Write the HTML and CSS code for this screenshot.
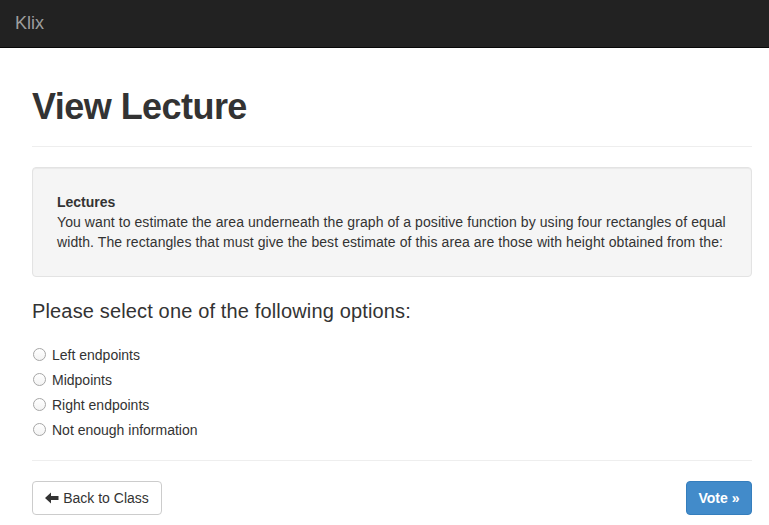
FILE: index.html
```html
<!DOCTYPE html>
<html>
<head>
<meta charset="utf-8">
<title>Klix</title>
<link rel="stylesheet" href="styles.css">
</head>
<body>
<nav class="navbar">
  <a class="brand" href="#">Klix</a>
</nav>
<main class="container">
  <div class="page-header">
    <h1>View Lecture</h1>
  </div>
  <div class="well">
    <div class="well-inner">
      <strong class="well-title">Lectures</strong>
      <p class="question">You want to estimate the area underneath the graph of a positive function by using four rectangles of equal width. The rectangles that must give the best estimate of this area are those with height obtained from the:</p>
    </div>
  </div>
  <form class="vote-form">
    <h3 class="prompt">Please select one of the following options:</h3>
    <div class="options">
      <label class="radio"><input type="radio" name="opt"><span class="circle"></span>Left endpoints</label>
      <label class="radio"><input type="radio" name="opt"><span class="circle"></span>Midpoints</label>
      <label class="radio"><input type="radio" name="opt"><span class="circle"></span>Right endpoints</label>
      <label class="radio"><input type="radio" name="opt"><span class="circle"></span>Not enough information</label>
    </div>
    <hr class="divider">
    <div class="actions">
      <a class="btn btn-default" href="#"><svg class="icon-arrow" viewBox="0 0 14 12" width="14" height="12"><path d="M0 6 L6 0.5 L6 4 L13.5 4 L13.5 8 L6 8 L6 11.5 Z" fill="#333"/></svg>Back to Class</a>
      <button class="btn btn-primary" type="button">Vote »</button>
    </div>
  </form>
</main>
</body>
</html>
```
FILE: styles.css
```css
* { box-sizing: border-box; }
html, body { margin: 0; padding: 0; }
body {
  font-family: "Liberation Sans", Arial, Helvetica, sans-serif;
  font-size: 14px;
  line-height: 20px;
  color: #333;
  background: #fff;
}
.navbar {
  height: 48px;
  background: #222;
  border-bottom: 1px solid #080808;
  display: flex;
  align-items: center;
  padding: 0 15px;
}
.brand {
  color: #9d9d9d;
  font-size: 18px;
  text-decoration: none;
  line-height: 20px;
  margin-top: -2px;
}
.container {
  width: 720px;
  margin-left: 32px;
}
.page-header {
  margin: 39px 0 20px;
  padding-bottom: 9px;
  border-bottom: 1px solid #eee;
}
.page-header h1 {
  margin: 0 0 10px;
  font-size: 36px;
  line-height: 39.6px;
  font-weight: bold;
  letter-spacing: -0.55px;
  color: #333;
}
.well {
  background: #f5f5f5;
  border: 1px solid #e3e3e3;
  border-radius: 4px;
  padding: 19px;
  box-shadow: inset 0 1px 1px rgba(0,0,0,0.05);
  margin-bottom: 23px;
}
.well-inner { padding: 5px; }
.well-title { display: block; font-weight: bold; }
.question { margin: 0; letter-spacing: 0.08px; }
.prompt {
  font-size: 20px;
  font-weight: normal;
  line-height: 22px;
  margin: 0;
  letter-spacing: 0.15px;
}
.options {
  display: flex;
  flex-direction: column;
  gap: 5px;
  margin-top: 23px;
}
.radio {
  display: flex;
  align-items: center;
  height: 20px;
  cursor: pointer;
}
.radio input { display: none; }
.circle {
  width: 13px;
  height: 13px;
  border-radius: 50%;
  border: 1px solid #a6a6a6;
  background: linear-gradient(#fff, #f3f3f3);
  margin: 0 6px 0 1px;
  flex: none;
}
.divider {
  border: 0;
  border-top: 1px solid #eee;
  margin: 20px 0 20px;
}
.actions {
  display: flex;
  justify-content: space-between;
}
.btn {
  display: inline-flex;
  align-items: center;
  justify-content: center;
  height: 34px;
  padding: 6px 0;
  font-family: inherit;
  font-size: 14px;
  line-height: 20px;
  white-space: nowrap;
  border-radius: 4px;
  border: 1px solid transparent;
  text-decoration: none;
  cursor: pointer;
}
.btn-default {
  color: #333;
  background: #fff;
  border-color: #ccc;
  width: 130px;
}
.icon-arrow { margin-right: 4px; }
.btn-primary {
  color: #fff;
  background: #428bca;
  border-color: #357ebd;
  font-weight: bold;
  width: 66px;
}
```
